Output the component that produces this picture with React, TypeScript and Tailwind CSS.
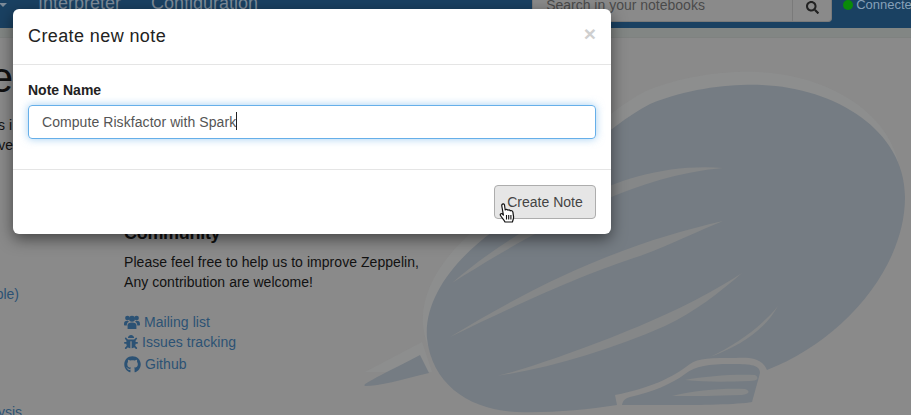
import { FaBug, FaGithub, FaSearch } from 'react-icons/fa';

const BALLOON =
  'M427 338 C424 300 452 262 492 232 C560 180 600 130 650 104 C690 88 730 84 762 85 C835 88 905 130 905 197 C905 270 840 342 767 370 C762 358 750 357 735 358 C712 358 698 358 690 364 C672 378 650 388 615 395 L617 405 C585 410 550 413 517 412 C470 410 432 385 427 338 Z';
const GONDOLA =
  'M622 405 C623 400 626 398 630 397 C652 392 672 384 685 374 C695 366 710 364 730 364 C748 364 760 364 760 373 L752 402 C730 406 660 405 622 405 Z';

const Zeppelin = () => (
  <svg className="absolute left-0 top-0" width="911" height="415" viewBox="0 0 911 415">
    <path d={BALLOON} fill="#8d8e8e" transform="translate(-4 -13)" />
    <path d="M365 372 L422 342 L432 372 Z" fill="#8d8e8e" />
    <path d="M365 386 C362 384 372 380 420 355 L429 373 C400 380 380 386 365 386 Z" fill="#757c83" />
    <path d={BALLOON} fill="#757c83" />
    <path d={GONDOLA} fill="#757c83" />
    <g fill="#858788">
      <path d="M723 168 C670 164 620 178 580 200 C530 226 490 250 452 283 C495 256 545 226 600 202 C640 184 680 172 723 168 Z" />
      <path d="M723 221 C640 240 560 270 450 337 C530 298 590 272 640 256 C670 245 700 230 723 221 Z" />
      <path d="M742 273 C700 300 660 318 610 338 C570 353 530 368 497 376 C550 368 610 350 665 326 C695 312 720 292 742 273 Z" />
      <path d="M778 306 C760 328 735 345 710 357 C740 346 765 330 778 306 Z" />
      <path d="M685 380 C705 376 735 374 755 375 C760 378 757 381 750 381 C725 382 705 382 685 380 Z" />
      <path d="M672 396 C695 390 725 388 745 389 C751 391 749 394 742 395 C715 396 695 396 672 396 Z" />
    </g>
  </svg>
);

const UsersIcon = () => (
  <svg width="16" height="14" viewBox="0 0 16 14" fill="currentColor" className="shrink-0">
    <circle cx="3.4" cy="3" r="2.3" />
    <circle cx="12.6" cy="3" r="2.3" />
    <circle cx="8" cy="3.8" r="3" />
    <path d="M3.6 14 V10.2 C3.6 8.2 5 7.4 8 7.4 C11 7.4 12.4 8.2 12.4 10.2 V14 Z" />
    <path d="M0 9.4 C0 6.6 1 5.8 3.4 5.8 C4 5.8 4.6 6.4 5 6.8 C3.5 7.4 2.8 8.5 2.7 10.6 H1 C.4 10.6 0 10 0 9.4 Z" />
    <path d="M16 9.4 C16 6.6 15 5.8 12.6 5.8 C12 5.8 11.4 6.4 11 6.8 C12.5 7.4 13.2 8.5 13.3 10.6 H15 C15.6 10.6 16 10 16 9.4 Z" />
  </svg>
);

const HandCursor = () => (
  <svg className="absolute left-[499px] top-[203px]" width="17" height="20" viewBox="0 0 17 20">
    <path
      d="M3 1.5 C3.8 .6 5.2 .8 5.5 2 L6.2 7 C7 6 8.4 6.2 8.7 7.2 C9.6 6.5 10.9 6.8 11.2 7.8 C12.2 7.4 13.6 7.8 13.9 9.2 L14.6 14 C14.6 16 14 17 13.4 19 L6 19 C5 16.5 3 15 1.5 12.5 C.8 11.2 2 10 3.2 10.8 L4.4 12 L2.8 3 C2.7 2.5 2.8 2 3 1.5 Z"
      fill="#fff"
      stroke="#111"
      strokeWidth="1.2"
      strokeLinejoin="round"
    />
    <path d="M7.5 12 V16.5 M9.7 12 V16.5 M11.9 12 V16.5" stroke="#111" strokeWidth="1.1" />
  </svg>
);

const NavBar = () => (
  <div className="flex h-7 items-start overflow-hidden bg-[#1a4162] text-[#7d8b99]">
    <div className="ml-[-1px] mt-[3px] h-0 w-0 shrink-0 border-x-4 border-t-4 border-x-transparent border-t-[#7d8b99]" />
    <div className="ml-[31px] mt-[-9px] flex shrink-0 gap-[30px] text-lg leading-6">
      <span>Interpreter</span>
      <span>Configuration</span>
    </div>
    <div className="ml-[274px] flex h-[22px] w-[300px] shrink-0 rounded-b border border-t-0 border-[#7a7a7a] bg-[#8a8a8a]">
      <div className="flex-1 pl-[13px] text-sm leading-[10px] text-[#4a4a4a]">Search in your notebooks</div>
      <div className="flex w-[39px] justify-center border-l border-[#7a7a7a] pt-[1px] text-[#222]">
        <FaSearch size={13} />
      </div>
    </div>
    <div className="ml-[11px] flex items-center gap-[3px] text-[13px] leading-[8px] whitespace-nowrap text-[#86a0b8]">
      <span className="h-[10px] w-[10px] shrink-0 rounded-full bg-[#0a8a0a]" />
      <span>Connected</span>
    </div>
  </div>
);

const Background = () => (
  <div className="absolute inset-0 overflow-hidden bg-[#8a8a8a]">
    <NavBar />
    <div className="h-[10px] border-b border-[#7f8280] bg-[#828684]" />
    <Zeppelin />
    <div className="relative flex text-sm leading-5 text-[#111]">
      <div className="flex w-[124px] shrink-0 flex-col items-end whitespace-nowrap">
        <div className="mt-[16px] pr-[111px] text-[42px] leading-[48px]">He</div>
        <div className="mt-[13px] pr-[112px]">s i</div>
        <div className="pr-[111px]">ve</div>
        <div className="mt-[129px] pr-[105px] text-[#2c5274]">able)</div>
        <div className="mt-[98px] pr-[102px] text-[#2c5274]">alysis</div>
      </div>
      <div className="pt-[185px] tracking-[0.05px]">
        <h3 className="text-lg leading-5 font-bold tracking-[-0.3px]">Community</h3>
        <p className="mt-[9px]">Please feel free to help us to improve Zeppelin,</p>
        <p>Any contribution are welcome!</p>
        <div className="mt-[20px] flex flex-col text-[#2c5274]">
          <a className="flex h-5 items-center gap-[4px]">
            <UsersIcon />
            Mailing list
          </a>
          <a className="flex h-5 items-center gap-[4px]">
            <FaBug size={14} />
            Issues tracking
          </a>
          <a className="mt-[1px] flex h-[22px] items-center gap-[4px]">
            <FaGithub size={17} />
            Github
          </a>
        </div>
      </div>
    </div>
  </div>
);

const CreateNoteModal = () => (
  <div className="absolute left-[13px] top-[9px] w-[598px] rounded-md bg-white shadow-[0_5px_15px_rgba(0,0,0,0.5)]">
    <div className="relative h-[56px] border-b border-[#e5e5e5] pl-[15px] pt-[14px]">
      <h4 className="text-lg leading-[26px] tracking-[0.4px] text-[#222]">Create new note</h4>
      <span className="absolute right-[15px] top-[13px] text-[21px] leading-[24px] font-bold text-[#cfcfcf]">×</span>
    </div>
    <div className="relative h-[104px] px-[15px] pt-[15px]">
      <label className="block text-sm leading-5 font-bold text-[#222]">Note Name</label>
      <input
        readOnly
        value="Compute Riskfactor with Spark"
        className="mt-[5px] h-[34px] w-full rounded border border-[#66afe9] px-[13px] text-sm tracking-[0.07px] text-[#555] caret-transparent shadow-[0_0_8px_rgba(102,175,233,0.6)] outline-none"
      />
      <span className="absolute left-[223px] top-[47px] h-[18px] w-px bg-[#222]" />
    </div>
    <div className="flex h-[65px] justify-end border-t border-[#e5e5e5] px-[15px] pt-[15px]">
      <button className="h-[34px] w-[102px] rounded border border-[#adadad] bg-[#e6e6e6] text-sm text-[#444]">
        Create Note
      </button>
    </div>
  </div>
);

export default function App() {
  return (
    <div className="relative h-[415px] w-[911px] overflow-hidden font-['Liberation_Sans',Arial,sans-serif]">
      <Background />
      <CreateNoteModal />
      <HandCursor />
    </div>
  );
}
